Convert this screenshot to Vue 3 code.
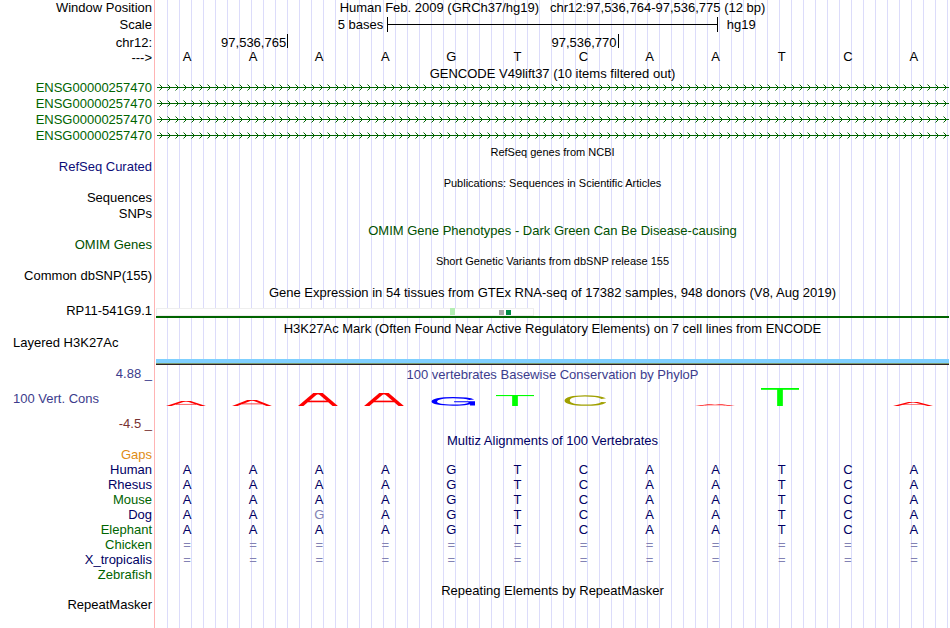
<script setup>
const position = 'Human Feb. 2009 (GRCh37/hg19)\u00a0\u00a0 chr12:97,536,764-97,536,775 (12 bp)'

const bases = 'AAAAGTCAATCA'.split('')

const genes = ['ENSG00000257470', 'ENSG00000257470', 'ENSG00000257470', 'ENSG00000257470']

// dense tracks that have no items in this window
const emptyTracks = [
  { title: 'RefSeq genes from NCBI', small: true, color: 'black', labels: ['RefSeq Curated'], labelColor: 'blue' },
  { title: 'Publications: Sequences in Scientific Articles', small: true, color: 'black', labels: ['Sequences', 'SNPs'], labelColor: 'black' },
  { title: 'OMIM Gene Phenotypes - Dark Green Can Be Disease-causing', small: false, color: 'omim', labels: ['OMIM Genes'], labelColor: 'omim' },
  { title: 'Short Genetic Variants from dbSNP release 155', small: true, color: 'black', labels: ['Common dbSNP(155)'], labelColor: 'black' },
]

// height of each base in the conservation logo, in pixels
const scores = [
  { base: 'A', height: 5 },
  { base: 'A', height: 6 },
  { base: 'A', height: 13 },
  { base: 'A', height: 13 },
  { base: 'G', height: 9 },
  { base: 'T', height: 11 },
  { base: 'C', height: 11 },
  { base: '', height: 0 },
  { base: 'A', height: 2 },
  { base: 'T', height: 18 },
  { base: '', height: 0 },
  { base: 'A', height: 4 },
]

const species = [
  { name: 'Gaps', color: 'orange', seq: '' },
  { name: 'Human', color: 'navy', seq: 'AAAAGTCAATCA' },
  { name: 'Rhesus', color: 'navy', seq: 'AAAAGTCAATCA' },
  { name: 'Mouse', color: 'green', seq: 'AAAAGTCAATCA' },
  { name: 'Dog', color: 'navy', seq: 'AAGAGTCAATCA' },
  { name: 'Elephant', color: 'green', seq: 'AAAAGTCAATCA' },
  { name: 'Chicken', color: 'green', seq: '============' },
  { name: 'X_tropicalis', color: 'navy', seq: '============' },
  { name: 'Zebrafish', color: 'green', seq: '' },
]

const isFaint = (char, index) => char !== bases[index]
</script>

<template>
  <main class="browser">
    <div class="row">
      <div class="label">Window Position</div>
      <div class="position">{{ position }}</div>
    </div>
    <div class="row row-scale">
      <div class="label">Scale</div>
      <div class="scale">
        <span class="scale-size">5 bases</span>
        <span class="scale-bar"><i></i></span>
        <span class="scale-db">hg19</span>
      </div>
    </div>
    <div class="row row-ruler">
      <div class="label">chr12:</div>
      <div class="ruler">
        <span class="ruler-first">97,536,765</span>
        <span class="ruler-second">97,536,770</span>
      </div>
    </div>
    <div class="row">
      <div class="label">---&gt;</div>
      <div class="bases">
        <span v-for="(base, i) in bases" :key="i">{{ base }}</span>
      </div>
    </div>

    <section class="track">
      <h2 class="title">GENCODE V49lift37 (10 items filtered out)</h2>
      <div v-for="(gene, i) in genes" :key="i" class="row">
        <div class="label green">{{ gene }}</div>
        <svg class="gene" height="16">
          <defs>
            <pattern :id="`strand-${i}`" width="8" height="16" patternUnits="userSpaceOnUse">
              <path d="M3.5 4.5 L6.5 7.5 L3.5 10.5" fill="none" stroke="#006400" stroke-width="1" />
            </pattern>
          </defs>
          <rect x="1" y="7" width="100%" height="1" fill="#006400" />
          <rect width="100%" height="16" :fill="`url(#strand-${i})`" />
        </svg>
      </div>
    </section>

    <section v-for="track in emptyTracks" :key="track.title" class="track">
      <h2 class="title" :class="[track.color, { small: track.small }]">{{ track.title }}</h2>
      <div v-for="label in track.labels" :key="label" class="row">
        <div class="label" :class="track.labelColor">{{ label }}</div>
      </div>
    </section>

    <section class="track">
      <h2 class="title">Gene Expression in 54 tissues from GTEx RNA-seq of 17382 samples, 948 donors (V8, Aug 2019)</h2>
      <div class="row row-gtex">
        <div class="label">RP11-541G9.1</div>
        <div class="gtex">
          <svg width="378" height="8">
            <rect width="378" height="8" fill="#eeeeee" />
            <rect x="1" y="1" width="376" height="6" fill="#ffffff" />
            <rect x="294" y="0" width="5" height="7" fill="#b4eeb4" />
            <rect x="343" y="2" width="5" height="5" fill="#a6a6a6" />
            <rect x="350" y="2" width="5" height="5" fill="#008b45" />
          </svg>
        </div>
      </div>
    </section>

    <section class="track">
      <h2 class="title">H3K27Ac Mark (Often Found Near Active Regulatory Elements) on 7 cell lines from ENCODE</h2>
      <div class="row row-signal">
        <div class="label label-left">Layered H3K27Ac</div>
        <div class="signal"></div>
      </div>
    </section>

    <section class="track row">
      <div class="cons-labels">
        <div class="label slate">4.88 _</div>
        <div class="label label-left slate">100 Vert. Cons</div>
        <div class="label brown">-4.5 _</div>
      </div>
      <div>
        <h2 class="title title-inner slate">100 vertebrates Basewise Conservation by PhyloP</h2>
        <div class="logo">
          <div v-for="(score, i) in scores" :key="i" class="logo-cell">
            <svg
              v-if="score.base"
              viewBox="0 0 40 40"
              preserveAspectRatio="none"
              :class="`logo-${score.base.toLowerCase()}`"
              :style="{ height: `${score.height}px` }"
            >
              <g v-if="score.base === 'A'" stroke="#ff0000" stroke-width="5">
                <line x1="2" y1="42" x2="18" y2="0" />
                <line x1="38" y1="42" x2="22" y2="0" />
                <line x1="16" y1="2" x2="24" y2="2" />
                <line x1="10" y1="26" x2="30" y2="26" />
              </g>
              <g v-else-if="score.base === 'T'" fill="#00ff00">
                <rect x="0" y="0" width="40" height="4" />
                <rect x="17" y="0" width="6" height="40" />
              </g>
              <g v-else-if="score.base === 'C'" fill="none" stroke="#a0a000" stroke-width="5">
                <path d="M38 13 C34 5 28 3 20 3 C9 3 3 10 3 20 C3 30 9 37 20 37 C29 37 35 34 38 26" />
              </g>
              <g v-else fill="none" stroke="#0000ff" stroke-width="5">
                <path d="M37 12 C34 5 28 3 20 3 C9 3 3 10 3 20 C3 30 9 36 20 36 C30 36 36 31 37 22" />
                <path d="M21 21 H40 M38 21 V38" />
              </g>
            </svg>
          </div>
        </div>
      </div>
    </section>

    <section class="track">
      <h2 class="title navy">Multiz Alignments of 100 Vertebrates</h2>
      <table class="alignment">
        <tbody>
          <tr v-for="s in species" :key="s.name">
            <th scope="row" :class="s.color">{{ s.name }}</th>
            <td v-for="(base, i) in bases" :key="i" :class="{ faint: isFaint(s.seq[i], i) }">{{ s.seq[i] }}</td>
          </tr>
        </tbody>
      </table>
    </section>

    <section class="last">
      <h2 class="title">Repeating Elements by RepeatMasker</h2>
      <div class="row">
        <div class="label">RepeatMasker</div>
      </div>
    </section>
  </main>
</template>

<style>
body {
  margin: 0;
  background: #ffffff;
}
</style>

<style scoped>
.browser {
  --label-width: 156px;
  --grid: #dcdcfa;

  margin-right: 1px;
  font-family: 'Liberation Sans', Arial, Helvetica, sans-serif;
  font-size: 13px;
  line-height: 16px;
  color: #000000;
  white-space: nowrap;
  background:
    linear-gradient(#ffb4b4, #ffb4b4) 154px 0 / 1px 100% no-repeat,
    linear-gradient(#ffffff, #ffffff) 0 0 / 160px 100% no-repeat,
    linear-gradient(90deg, var(--grid) 1px, transparent 1px) 11px 0 / 12px 100% repeat-x;
}

.track {
  margin-bottom: 1px;
}

.row {
  display: grid;
  grid-template-columns: var(--label-width) minmax(0, 1fr);
  min-height: 16px;
}

.label {
  padding-right: 4px;
  text-align: right;
}

.label-left {
  padding-left: 13px;
  text-align: left;
}

.position {
  text-align: center;
}

.title {
  height: 14px;
  margin: 0 0 0 var(--label-width);
  font-size: 13px;
  font-weight: 400;
  line-height: 16px;
  text-align: center;
}

.small {
  font-size: 11px;
  line-height: 14px;
}

.title-inner {
  height: 16px;
  margin: 0;
  line-height: 18px;
}

.black {
  color: #000000;
}

.green {
  color: #006400;
}

.omim {
  color: #005000;
}

.blue {
  color: #0c0c78;
}

.navy {
  color: #000064;
}

.slate {
  color: #3c3c8c;
}

.brown {
  color: #783232;
}

.orange {
  color: #e08c14;
}

.row-scale {
  line-height: 18px;
}

.row-ruler {
  height: 16px;
  line-height: 18px;
}

.scale,
.ruler,
.bases,
.logo {
  display: grid;
  grid-template-columns: repeat(24, minmax(0, 1fr));
}

.scale-size {
  grid-column: span 7;
  padding-right: 4px;
  text-align: right;
}

.scale-bar {
  grid-column: span 10;
  display: flex;
  align-items: center;
  height: 15px;
  margin-top: 1px;
  border-left: 1px solid #000000;
  border-right: 1px solid #000000;
}

.scale-bar i {
  flex: 1;
  height: 1px;
  background: #000000;
}

.scale-db {
  grid-column: span 7;
  padding-left: 9px;
}

.row-ruler {
  grid-template-rows: 16px;
}

.ruler span {
  height: 14px;
  padding-right: 1px;
  text-align: right;
  border-right: 1px solid #000000;
}

.ruler-first {
  grid-column: span 4;
}

.ruler-second {
  grid-column: span 10;
}

.bases span {
  grid-column: span 2;
  padding-right: 4px;
  line-height: 13px;
  text-align: center;
}

.gene {
  display: block;
  width: 100%;
}

.row-gtex {
  grid-template-rows: 19px;
  margin-bottom: 3px;
  line-height: 24px;
}

.gtex {
  display: flex;
  align-items: flex-end;
  border-bottom: 2px solid #006400;
}

.row-signal {
  height: 30px;
}

.signal {
  align-self: end;
  height: 5px;
  background: linear-gradient(#7fd0ff 4px, #7a9a70 4px);
  border-bottom: 1px solid #302020;
}

.cons-labels {
  display: flex;
  flex-direction: column;
  justify-content: space-between;
  height: 66px;
}

.logo {
  height: 24px;
}

.logo-cell {
  grid-column: span 2;
  display: flex;
  align-items: flex-end;
  justify-content: center;
  padding-right: 6px;
}

.logo-a {
  width: 40px;
}

.logo-t {
  width: 38px;
  margin-right: 2px;
}

.logo-c {
  width: 42px;
  margin-left: 4px;
}

.logo-g {
  width: 44px;
  margin-left: 6px;
}

.alignment {
  width: 100%;
  table-layout: fixed;
  border-collapse: collapse;
  line-height: 15px;
}

.alignment th {
  width: 152px;
  padding: 0 4px 0 0;
  font-weight: 400;
  text-align: right;
}

.alignment td {
  padding: 0 4px 0 0;
  color: #000064;
  text-align: center;
}

.alignment .faint {
  color: #8282b4;
}

.last {
  padding-bottom: 15px;
}
</style>
